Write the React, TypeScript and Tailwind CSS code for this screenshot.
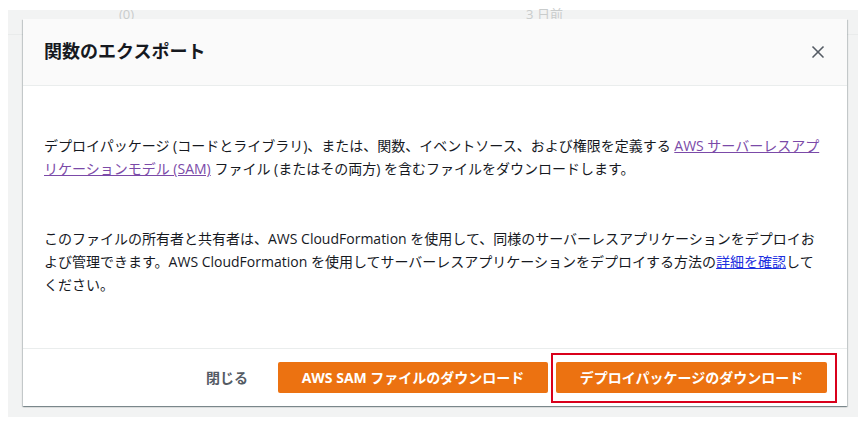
import { X } from 'lucide-react';

const font = "font-['Open_Sans','Noto_Sans_CJK_JP',sans-serif]";

export default function App() {
    return (
        <div className={`relative h-[424px] w-[858px] overflow-hidden bg-white text-[#16191f] ${font}`}>
            {/* page behind the dialog */}
            <div className="ml-[8px] mt-[10px] h-[407px] bg-[#f2f3f3]">
                <div className="flex h-[25px] border-b border-[#e9ebeb] text-[13px] leading-[8px] text-[#c9cccc]">
                    <span className="ml-[111px]">(0)</span>
                    <span className="ml-[392px]">3 日前</span>
                </div>
            </div>

            {/* modal */}
            <div className="absolute left-[23px] top-[19px] flex h-[387px] w-[824px] flex-col bg-white shadow-[0_1px_1px_0_rgba(0,28,36,0.3),1px_1px_1px_0_rgba(0,28,36,0.15),-1px_1px_1px_0_rgba(0,28,36,0.15)]">
                <div className="flex h-[67px] items-center justify-between border-b border-[#eaeded] bg-[#fafafa] pl-[21px] pr-[17px]">
                    <h1 className="-mt-[3px] text-[18px] font-bold leading-none">関数のエクスポート</h1>
                    <button className="flex h-[24px] w-[24px] items-center justify-center text-[#545b64]">
                        <X size={20} strokeWidth={2} />
                    </button>
                </div>

                <div className="flex-1 px-[21px] pt-[48px] text-[14px] leading-[23px]">
                    <p>
                        デプロイパッケージ (コードとライブラリ)、または、関数、イベントソース、および権限を定義する{' '}
                        <a className="text-[#7b4aa8] underline">AWS サーバーレスアプリケーションモデル (SAM)</a> ファイル (またはその両方)
                        を含むファイルをダウンロードします。
                    </p>
                    <p className="mt-[47px]">
                        このファイルの所有者と共有者は、AWS CloudFormation を使用して、同様のサーバーレスアプリケーションをデプロイおよび管理できます。AWS
                        CloudFormation を使用してサーバーレスアプリケーションをデプロイする方法の
                        <a className="text-[#1d2fe0] underline">詳細を確認</a>
                        してください。
                    </p>
                </div>

                <div className="flex h-[58px] items-center justify-end gap-[8px] border-t border-[#eaeded] pr-[20px]">
                    <button className="mr-[2px] h-[31px] px-[20px] text-[14px] font-bold text-[#545b64]">閉じる</button>
                    <button className="h-[31px] w-[270px] rounded-[2px] bg-[#ec7211] text-[14px] font-bold text-white">
                        AWS SAM ファイルのダウンロード
                    </button>
                    <div className="relative">
                        <button className="h-[31px] w-[271px] rounded-[2px] bg-[#ec7211] text-[14px] font-bold text-white">
                            デプロイパッケージのダウンロード
                        </button>
                        <span className="pointer-events-none absolute -bottom-[10px] -left-[5px] -right-[10px] -top-[9px] border-2 border-[#d9001b]" />
                    </div>
                </div>
            </div>
        </div>
    );
}
